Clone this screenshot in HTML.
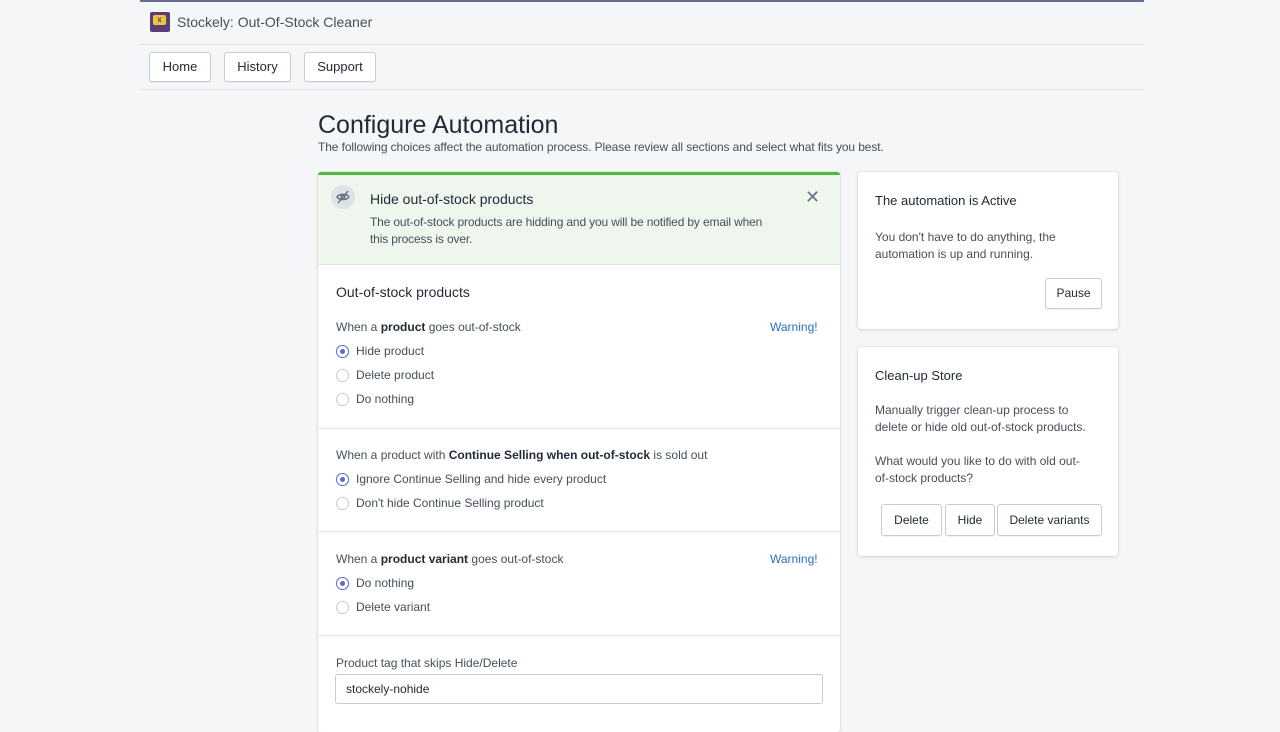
<!DOCTYPE html>
<html><head><style>
body{margin:0;width:1280px;height:720px;overflow:hidden;background:#f4f6f8;font-family:"Liberation Sans",sans-serif;color:#212b36;font-size:13px;position:relative}
.a{position:absolute}
.btn{position:absolute;background:#fff;border:1px solid #c4cdd5;border-radius:3px;box-shadow:0 1px 0 rgba(22,29,37,.05);font-size:13px;color:#212b36;text-align:center;box-sizing:border-box}
.card{position:absolute;background:#fff;box-shadow:0 0 0 1px rgba(63,63,68,.05),0 1px 3px rgba(63,63,68,.15);border-radius:3px}
.r{position:absolute;width:13px;height:13px;border:1px solid #c4cdd5;border-radius:50%;box-sizing:border-box;background:#fff}
.r.on{border-color:#5c6ac4}
.r.on:after{content:"";position:absolute;left:3px;top:3px;width:5px;height:5px;border-radius:50%;background:#5c6ac4}
.t{position:absolute;font-size:12px;color:#454f5b;white-space:nowrap}
.sep{position:absolute;left:0;right:0;height:1px;background:#dfe3e8}
</style></head><body>
<div class="a" style="left:140px;top:0;width:1004px;height:2px;background:#6b6e94"></div>
<div class="a" style="left:150px;top:12px;width:20px;height:20px;background:#5a3e7a;border-radius:2px"></div>
<div class="a" style="left:153px;top:15px;width:13px;height:10px;background:#e8c53a;border-radius:2px;font-size:8px;line-height:10px;text-align:center;color:#5a3e7a;font-weight:bold">x</div>
<div class="a" style="left:177px;top:14px;font-size:14px;color:#454f5b">Stockely: Out-Of-Stock Cleaner</div>
<div class="a" style="left:140px;top:44px;width:1004px;height:1px;background:#dfe3e8"></div>
<div class="btn" style="left:149px;top:52px;width:62px;height:30px;line-height:28px">Home</div>
<div class="btn" style="left:224px;top:52px;width:67px;height:30px;line-height:28px">History</div>
<div class="btn" style="left:304px;top:52px;width:72px;height:30px;line-height:28px">Support</div>
<div class="a" style="left:140px;top:89px;width:1004px;height:1px;background:#dfe3e8"></div>

<div class="a" style="left:318px;top:111px;font-size:25px;color:#212b36">Configure Automation</div>
<div class="a" style="left:318px;top:140px;font-size:12px;color:#454f5b;letter-spacing:-0.1px">The following choices affect the automation process. Please review all sections and select what fits you best.</div>

<div class="card" style="left:318px;top:172px;width:522px;height:560px;overflow:hidden">
 <div class="a" style="left:0;top:0;width:522px;height:92px;background:#eef6ee;border-top:3px solid #50b83c;box-sizing:border-box"></div>
 <div class="a" style="left:13px;top:13px;width:24px;height:24px;border-radius:50%;background:#dfe3e8"></div>
 <svg class="a" style="left:17px;top:17px" width="16" height="16" viewBox="0 0 16 16" fill="none" stroke="#637381" stroke-width="1.4"><path d="M2 8c2-3.5 10-3.5 12 0c-2 3.5-10 3.5-12 0z"/><circle cx="8" cy="8" r="2"/><path d="M3 14L13 2"/></svg>
 <div class="a" style="left:52px;top:19px;font-size:14px;color:#212b36">Hide out-of-stock products</div>
 <div class="a" style="left:52px;top:42px;font-size:12px;line-height:17px;color:#454f5b;white-space:nowrap;letter-spacing:-0.15px">The out-of-stock products are hidding and you will be notified by email when<br>this process is over.</div>
 <div class="a" style="left:487px;top:15px;font-size:18px;color:#637381">✕</div>
 <div class="sep" style="top:92px"></div>
 <div class="a" style="left:18px;top:112px;font-size:14px;color:#212b36">Out-of-stock products</div>
 <div class="t" style="left:18px;top:148px">When a <b style="color:#212b36">product</b> goes out-of-stock</div>
 <div class="a" style="left:452px;top:148px;font-size:12px;color:#2c6ecb">Warning!</div>
 <div class="r on" style="left:18px;top:173px"></div><div class="t" style="left:38px;top:172px">Hide product</div>
 <div class="r" style="left:18px;top:197px"></div><div class="t" style="left:38px;top:196px">Delete product</div>
 <div class="r" style="left:18px;top:221px"></div><div class="t" style="left:38px;top:220px">Do nothing</div>
 <div class="sep" style="top:256px"></div>
 <div class="t" style="left:18px;top:276px">When a product with <b style="color:#212b36">Continue Selling when out-of-stock</b> is sold out</div>
 <div class="r on" style="left:18px;top:301px"></div><div class="t" style="left:38px;top:300px">Ignore Continue Selling and hide every product</div>
 <div class="r" style="left:18px;top:325px"></div><div class="t" style="left:38px;top:324px">Don't hide Continue Selling product</div>
 <div class="sep" style="top:359px"></div>
 <div class="t" style="left:18px;top:380px">When a <b style="color:#212b36">product variant</b> goes out-of-stock</div>
 <div class="a" style="left:452px;top:380px;font-size:12px;color:#2c6ecb">Warning!</div>
 <div class="r on" style="left:18px;top:405px"></div><div class="t" style="left:38px;top:404px">Do nothing</div>
 <div class="r" style="left:18px;top:429px"></div><div class="t" style="left:38px;top:428px">Delete variant</div>
 <div class="sep" style="top:463px"></div>
 <div class="t" style="left:18px;top:484px">Product tag that skips Hide/Delete</div>
 <div class="a" style="left:17px;top:502px;width:488px;height:30px;border:1px solid #c4cdd5;border-radius:3px;box-sizing:border-box;padding:0 10px;line-height:28px;font-size:12px;color:#212b36">stockely-nohide</div>
</div>

<div class="card" style="left:858px;top:172px;width:260px;height:157px">
 <div class="a" style="left:17px;top:21px;font-size:13px;color:#212b36">The automation is Active</div>
 <div class="a" style="left:17px;top:57px;font-size:12px;line-height:17px;color:#454f5b;width:220px">You don't have to do anything, the automation is up and running.</div>
 <div class="btn" style="left:187px;top:106px;width:57px;height:31px;line-height:29px;font-size:12px">Pause</div>
</div>
<div class="card" style="left:858px;top:347px;width:260px;height:209px">
 <div class="a" style="left:17px;top:21px;font-size:13px;color:#212b36">Clean-up Store</div>
 <div class="a" style="left:17px;top:55px;font-size:12px;line-height:17px;color:#454f5b;width:225px">Manually trigger clean-up process to delete or hide old out-of-stock products.</div>
 <div class="a" style="left:17px;top:106px;font-size:12px;line-height:17px;color:#454f5b;width:225px">What would you like to do with old out-<br>of-stock products?</div>
 <div class="btn" style="left:23px;top:157px;width:61px;height:32px;line-height:30px;font-size:12px">Delete</div>
 <div class="btn" style="left:87px;top:157px;width:50px;height:32px;line-height:30px;font-size:12px">Hide</div>
 <div class="btn" style="left:139px;top:157px;width:105px;height:32px;line-height:30px;font-size:12px">Delete variants</div>
</div>
</body></html>
